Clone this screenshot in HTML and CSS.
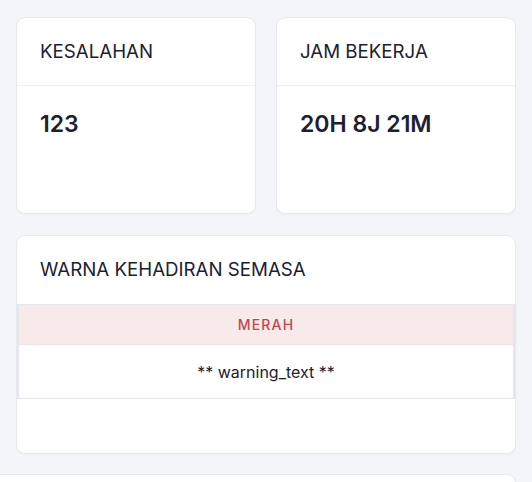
FILE: index.html
```html
<!DOCTYPE html>
<html lang="ms">
<head>
<meta charset="utf-8">
<title>Dashboard</title>
<link rel="stylesheet" href="styles.css">
</head>
<body>
<main class="page">
  <div class="stats">
    <section class="card stat-card">
      <header class="card-header">KESALAHAN</header>
      <div class="card-body"><span class="stat-value">123</span></div>
    </section>
    <section class="card stat-card">
      <header class="card-header">JAM BEKERJA</header>
      <div class="card-body"><span class="stat-value">20H 8J 21M</span></div>
    </section>
  </div>
  <section class="card status-card">
    <header class="card-header">WARNA KEHADIRAN SEMASA</header>
    <table class="status-table">
      <tr><td class="status-color">MERAH</td></tr>
      <tr><td class="status-text">** warning_text **</td></tr>
    </table>
  </section>
  <section class="card next-card"></section>
</main>
</body>
</html>
```

FILE: styles.css
```css
html, body {
  margin: 0;
  padding: 0;
  background: #f4f5f9;
  font-family: Inter, "Noto Sans", "Liberation Sans", sans-serif;
  color: #1b2130;
  overflow: hidden;
}

.page {
  padding: 17px 16px 0 16px;
}

.stats {
  display: grid;
  grid-template-columns: 1fr 1fr;
  gap: 20px;
}

.card {
  background: #ffffff;
  border: 1px solid #e6e8ee;
  border-radius: 9px;
  box-sizing: border-box;
  box-shadow: 0 1px 2px rgba(20, 30, 60, 0.03);
}

.stat-card {
  height: 197px;
}

.card-header {
  padding: 20px 23px;
  font-size: 18.7px;
  line-height: 27px;
  font-weight: 400;
  border-bottom: 1px solid #eef0f3;
}

.card-body {
  padding: 24px 23px 23px;
}

.stat-value {
  display: block;
  font-size: 23px;
  line-height: 28px;
  font-weight: 600;
}

.status-card {
  margin-top: 21px;
  height: 219px;
  overflow: hidden;
}

.status-card .card-header {
  border-bottom: none;
  padding-bottom: 21px;
}

.status-table {
  width: 100%;
  border-collapse: collapse;
}

.status-table td {
  text-align: center;
  border: 1px solid #e6e7ec;
  border-left: 2px solid #e6e7ec;
  border-right: 2px solid #e6e7ec;
  padding: 0;
}

.status-color {
  background: #f8e9eb;
  color: #c2474a;
  font-size: 14px;
  font-weight: 500;
  letter-spacing: 1.2px;
  height: 39px;
  border-top: 2px solid #e6e7ec;
}

.status-text {
  font-size: 16px;
  height: 53px;
  color: #1b2130;
}

.next-card {
  margin-top: 20px;
  margin-left: -24px;
  height: 60px;
}
```
